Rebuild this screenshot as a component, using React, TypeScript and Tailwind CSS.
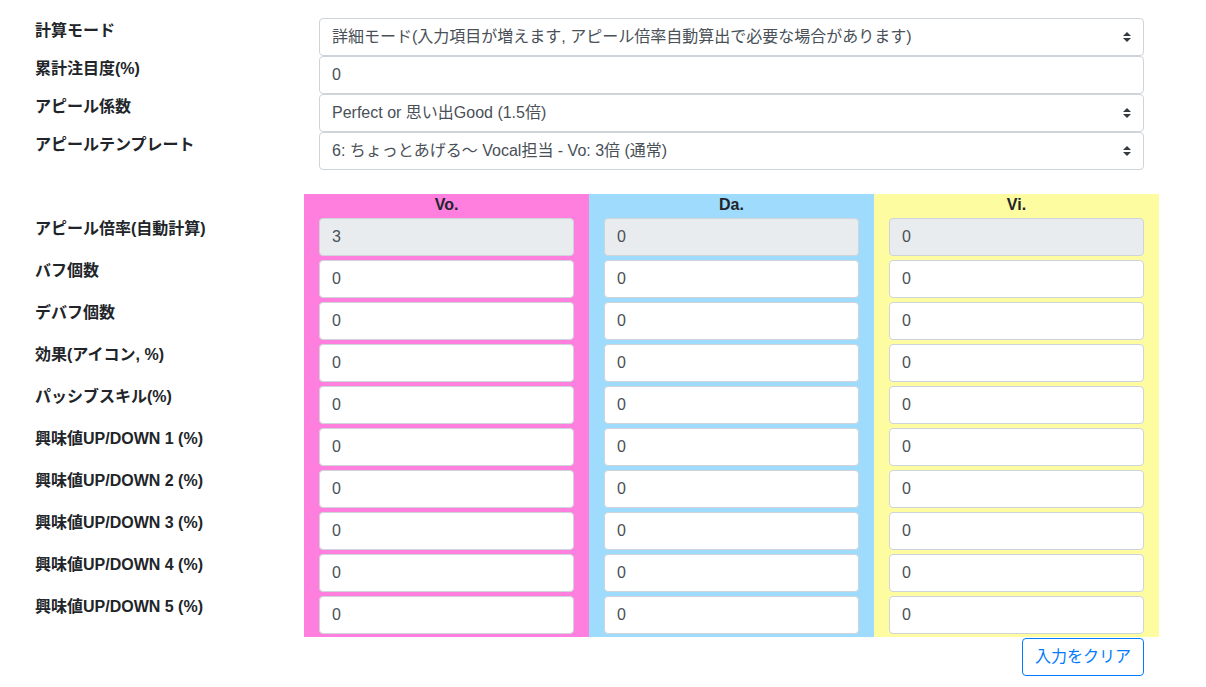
import React from "react";

const font = { fontFamily: '"Liberation Sans", "Noto Sans CJK JP", sans-serif' };

const inputCls =
  "block w-full h-[38px] px-3 border border-[#ced4da] rounded-[4px] text-[16px] leading-[24px] text-[#495057] outline-none";

function Select({ value }: { value: string }) {
  return (
    <div className={`${inputCls} relative flex items-center bg-white`}>
      <span className="truncate pr-6">{value}</span>
      <svg
        className="absolute right-[12px] top-1/2 -translate-y-1/2"
        width="8"
        height="10"
        viewBox="0 0 4 5"
      >
        <path fill="#343a40" d="M2 0L0 2h4zm0 5L0 3h4z" />
      </svg>
    </div>
  );
}

function Field({ value, disabled }: { value: string; disabled?: boolean }) {
  return (
    <input
      readOnly
      value={value}
      className={`${inputCls} ${disabled ? "bg-[#e9ecef]" : "bg-white"}`}
    />
  );
}

const topRows: { label: string; value: string; select: boolean }[] = [
  { label: "計算モード", value: "詳細モード(入力項目が増えます, アピール倍率自動算出で必要な場合があります)", select: true },
  { label: "累計注目度(%)", value: "0", select: false },
  { label: "アピール係数", value: "Perfect or 思い出Good (1.5倍)", select: true },
  { label: "アピールテンプレート", value: "6: ちょっとあげる〜 Vocal担当 - Vo: 3倍 (通常)", select: true },
];

const rowLabels = [
  "アピール倍率(自動計算)",
  "バフ個数",
  "デバフ個数",
  "効果(アイコン, %)",
  "パッシブスキル(%)",
  "興味値UP/DOWN 1 (%)",
  "興味値UP/DOWN 2 (%)",
  "興味値UP/DOWN 3 (%)",
  "興味値UP/DOWN 4 (%)",
  "興味値UP/DOWN 5 (%)",
];

const columns = [
  { name: "Vo.", bg: "bg-[#ff7fdf]", first: "3" },
  { name: "Da.", bg: "bg-[#9fdbfd]", first: "0" },
  { name: "Vi.", bg: "bg-[#fdfca0]", first: "0" },
];

export default function App() {
  return (
    <div className="w-[1206px] h-[687px] bg-white text-[#212529] overflow-hidden" style={font}>
      <div className="pl-[35px] pt-[18px] w-[1159px]">
        {/* top settings */}
        <div className="flex flex-col">
          {topRows.map((r) => (
            <div key={r.label} className="flex">
              <label className="w-[284px] font-bold text-[16px] leading-[24px] pt-px">{r.label}</label>
              <div className="w-[825px]">
                {r.select ? <Select value={r.value} /> : <Field value={r.value} />}
              </div>
            </div>
          ))}
        </div>

        {/* stats table */}
        <div className="flex mt-[24px]">
          <div className="w-[269px] pt-[22px]">
            {rowLabels.map((l) => (
              <div key={l} className="h-[42px] font-bold text-[16px] leading-[24px] pt-px">
                {l}
              </div>
            ))}
          </div>
          {columns.map((c) => (
            <div key={c.name} className={`w-[285px] px-[15px] pb-px ${c.bg}`}>
              <div className="h-[22px] text-center font-bold text-[16px] leading-[22px]">{c.name}</div>
              {rowLabels.map((l, i) => (
                <div key={l} className="py-[2px]">
                  <Field value={i === 0 ? c.first : "0"} disabled={i === 0} />
                </div>
              ))}
            </div>
          ))}
        </div>

        <div className="flex justify-end pr-[15px] mt-px">
          <button className="h-[38px] px-[12px] border border-[#007bff] rounded-[4px] text-[#007bff] text-[16px] leading-[24px] bg-white">
            入力をクリア
          </button>
        </div>
      </div>
    </div>
  );
}
